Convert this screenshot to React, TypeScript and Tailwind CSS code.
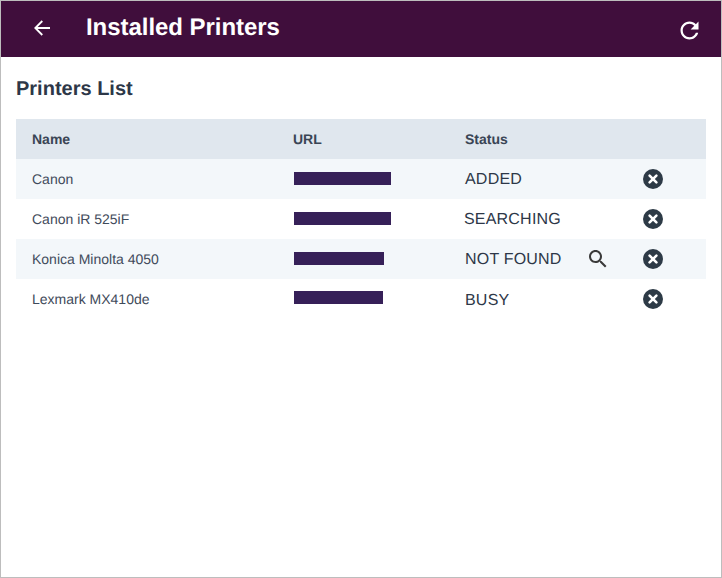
const rows = [
  { name: "Canon", bar: "w-[97px] -mt-px", status: "ADDED", bg: "bg-[#f3f7fa]", search: false, statusClass: "w-[121px] pt-px" },
  { name: "Canon iR 525iF", bar: "w-[97px] -mt-px", status: "SEARCHING", bg: "bg-white", search: false, statusClass: "w-[122px] -ml-px pt-px" },
  { name: "Konica Minolta 4050", bar: "w-[90px] -mt-px", status: "NOT FOUND", bg: "bg-[#f3f7fa]", search: true, statusClass: "w-[121px] pt-px" },
  { name: "Lexmark MX410de", bar: "w-[89px] -mt-[3px]", status: "BUSY", bg: "bg-white", search: false, statusClass: "w-[121px] pt-[3px]" },
];

function Icon({ d, className }: { d: string; className: string }) {
  return (
    <svg viewBox="0 0 24 24" className={className} fill="currentColor">
      <path d={d} />
    </svg>
  );
}

function CloseIcon() {
  return (
    <svg viewBox="0 0 24 24" className="w-6 h-6 ml-[31px] shrink-0">
      <circle cx="12" cy="12" r="10" fill="#2d3a46" />
      <path d="M8.6 8.6l6.8 6.8M15.4 8.6l-6.8 6.8" stroke="#ffffff" strokeWidth="2.6" strokeLinecap="round" fill="none" />
    </svg>
  );
}

const REFRESH = "M17.65 6.35C16.2 4.9 14.21 4 12 4c-4.42 0-7.99 3.58-7.99 8s3.57 8 7.99 8c3.73 0 6.84-2.55 7.73-6h-2.08c-.82 2.33-3.04 4-5.65 4-3.31 0-6-2.69-6-6s2.69-6 6-6c1.66 0 3.14.69 4.22 1.78L13 11h7V4l-2.35 2.35z";
const SEARCH = "M15.5 14h-.79l-.28-.27C15.41 12.59 16 11.11 16 9.5 16 5.91 13.09 3 9.5 3S3 5.91 3 9.5 5.91 16 9.5 16c1.61 0 3.09-.59 4.23-1.57l.27.28v.79l5 4.99L20.49 19l-4.99-5zm-6 0C7.01 14 5 11.99 5 9.5S7.01 5 9.5 5 14 7.01 14 9.5 11.99 14 9.5 14z";

export default function App() {
  return (
    <div className="w-[722px] h-[578px] bg-white border border-[#bdbdbd] font-['Liberation_Sans',Arial,sans-serif] text-[#2d3748] overflow-hidden [text-rendering:geometricPrecision]">
      <header className="h-[56px] bg-[#400e3c] flex items-center text-white">
        <svg viewBox="0 0 24 24" className="w-6 h-6 ml-[29px] -mt-[2px] shrink-0" fill="none" stroke="currentColor" strokeWidth="1.8">
          <path d="M20 12H5.5M12.3 5l-7 7 7 7" />
        </svg>
        <h1 className="ml-[32px] text-2xl font-bold leading-none -mt-[2px] tracking-[-0.05px]">Installed Printers</h1>
        <Icon d={REFRESH} className="w-[27px] h-[27px] ml-auto mr-[18px] mt-[3px] shrink-0" />
      </header>
      <main className="pl-[15px] pr-[15px]">
        <h2 className="pt-[20px] h-[43px] text-xl leading-[24px] font-bold">Printers List</h2>
        <div className="mt-[19px] w-[690px]">
          <div className="grid grid-cols-[261px_172px_1fr] h-[40px] items-center pl-[16px] bg-[#e0e7ee] text-sm font-bold text-[#3a4555]">
            <div>Name</div>
            <div>URL</div>
            <div>Status</div>
          </div>
          {rows.map((r) => (
            <div key={r.name} className={`grid grid-cols-[261px_172px_1fr] h-[40px] items-center pl-[16px] text-sm ${r.bg}`}>
              <div className="text-[#3f4a5a]">{r.name}</div>
              <div className="pl-px">
                <div className={`h-[13px] bg-[#362058] ${r.bar}`} />
              </div>
              <div className="flex items-center">
                <span className={`text-base leading-[26px] shrink-0 tracking-[0.2px] ${r.statusClass}`}>{r.status}</span>
                <span className="w-[24px] shrink-0">
                  {r.search && <Icon d={SEARCH} className="w-6 h-6 text-[#3a3a3a]" />}
                </span>
                <CloseIcon />
              </div>
            </div>
          ))}
        </div>
      </main>
    </div>
  );
}
